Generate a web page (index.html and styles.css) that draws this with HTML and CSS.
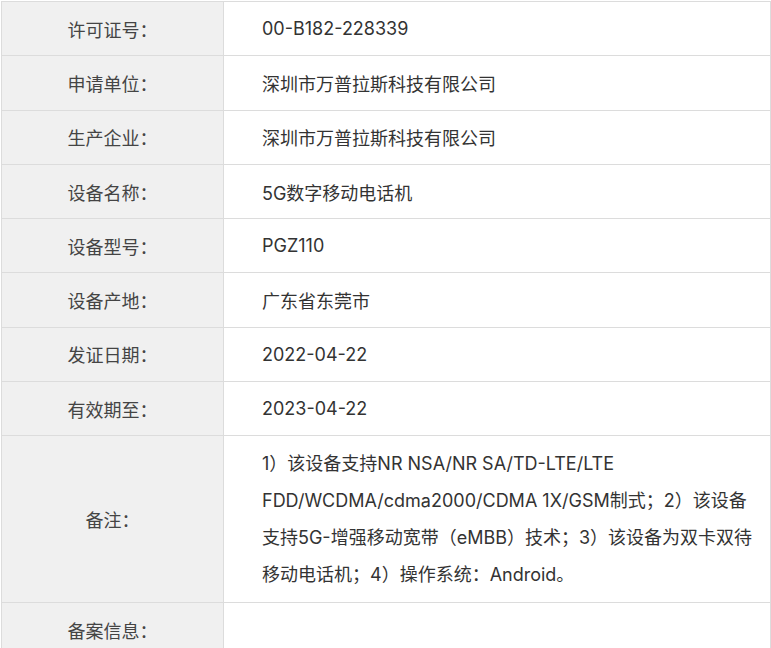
FILE: index.html
```html
<!DOCTYPE html>
<html lang="zh-CN">
<head>
  <meta charset="UTF-8">
  <meta name="viewport" content="width=device-width, initial-scale=1.0">
  <title>进网许可证信息</title>
  <link rel="stylesheet" href="styles.css">
</head>
<body>

<table class="license">
  <tr>
    <th>许可证号：</th>
    <td>00-B182-228339</td>
  </tr>
  <tr>
    <th>申请单位：</th>
    <td>深圳市万普拉斯科技有限公司</td>
  </tr>
  <tr>
    <th>生产企业：</th>
    <td>深圳市万普拉斯科技有限公司</td>
  </tr>
  <tr>
    <th>设备名称：</th>
    <td>5G数字移动电话机</td>
  </tr>
  <tr>
    <th>设备型号：</th>
    <td>PGZ110</td>
  </tr>
  <tr>
    <th>设备产地：</th>
    <td>广东省东莞市</td>
  </tr>
  <tr>
    <th>发证日期：</th>
    <td>2022-04-22</td>
  </tr>
  <tr>
    <th>有效期至：</th>
    <td>2023-04-22</td>
  </tr>
  <tr class="note">
    <th>备注：</th>
    <td>1）该设备支持NR NSA/NR SA/TD-LTE/LTE FDD/WCDMA/cdma2000/CDMA 1X/GSM制式；2）该设备支持5G-增强移动宽带（eMBB）技术；3）该设备为双卡双待移动电话机；4）操作系统：Android。</td>
  </tr>
  <tr>
    <th>备案信息：</th>
    <td></td>
  </tr>
</table>

</body>
</html>
```

FILE: styles.css
```css
body {
  margin: 0;
  background-color: #fff;
  font-family: "Inter", "Noto Sans CJK SC", sans-serif;
  color: #333;
}

.license {
  width: 770px;
  margin-top: 1px;
  margin-left: 1px;
  border-collapse: collapse;
  font-size: 18px;
}

.license th,
.license td {
  height: 53.3px;
  border: 1px solid #dcdcdc;
  padding: 0;
}

.license th {
  width: 221px;
  background-color: #f0f0f0;
  font-weight: normal;
  color: #444;
  text-align: center;
}

.license td {
  padding-left: 38px;
  padding-right: 14px;
  color: #333;
}

.note td {
  height: 147px;
  padding-top: 9px;
  padding-bottom: 9px;
  line-height: 37px;
}
```
